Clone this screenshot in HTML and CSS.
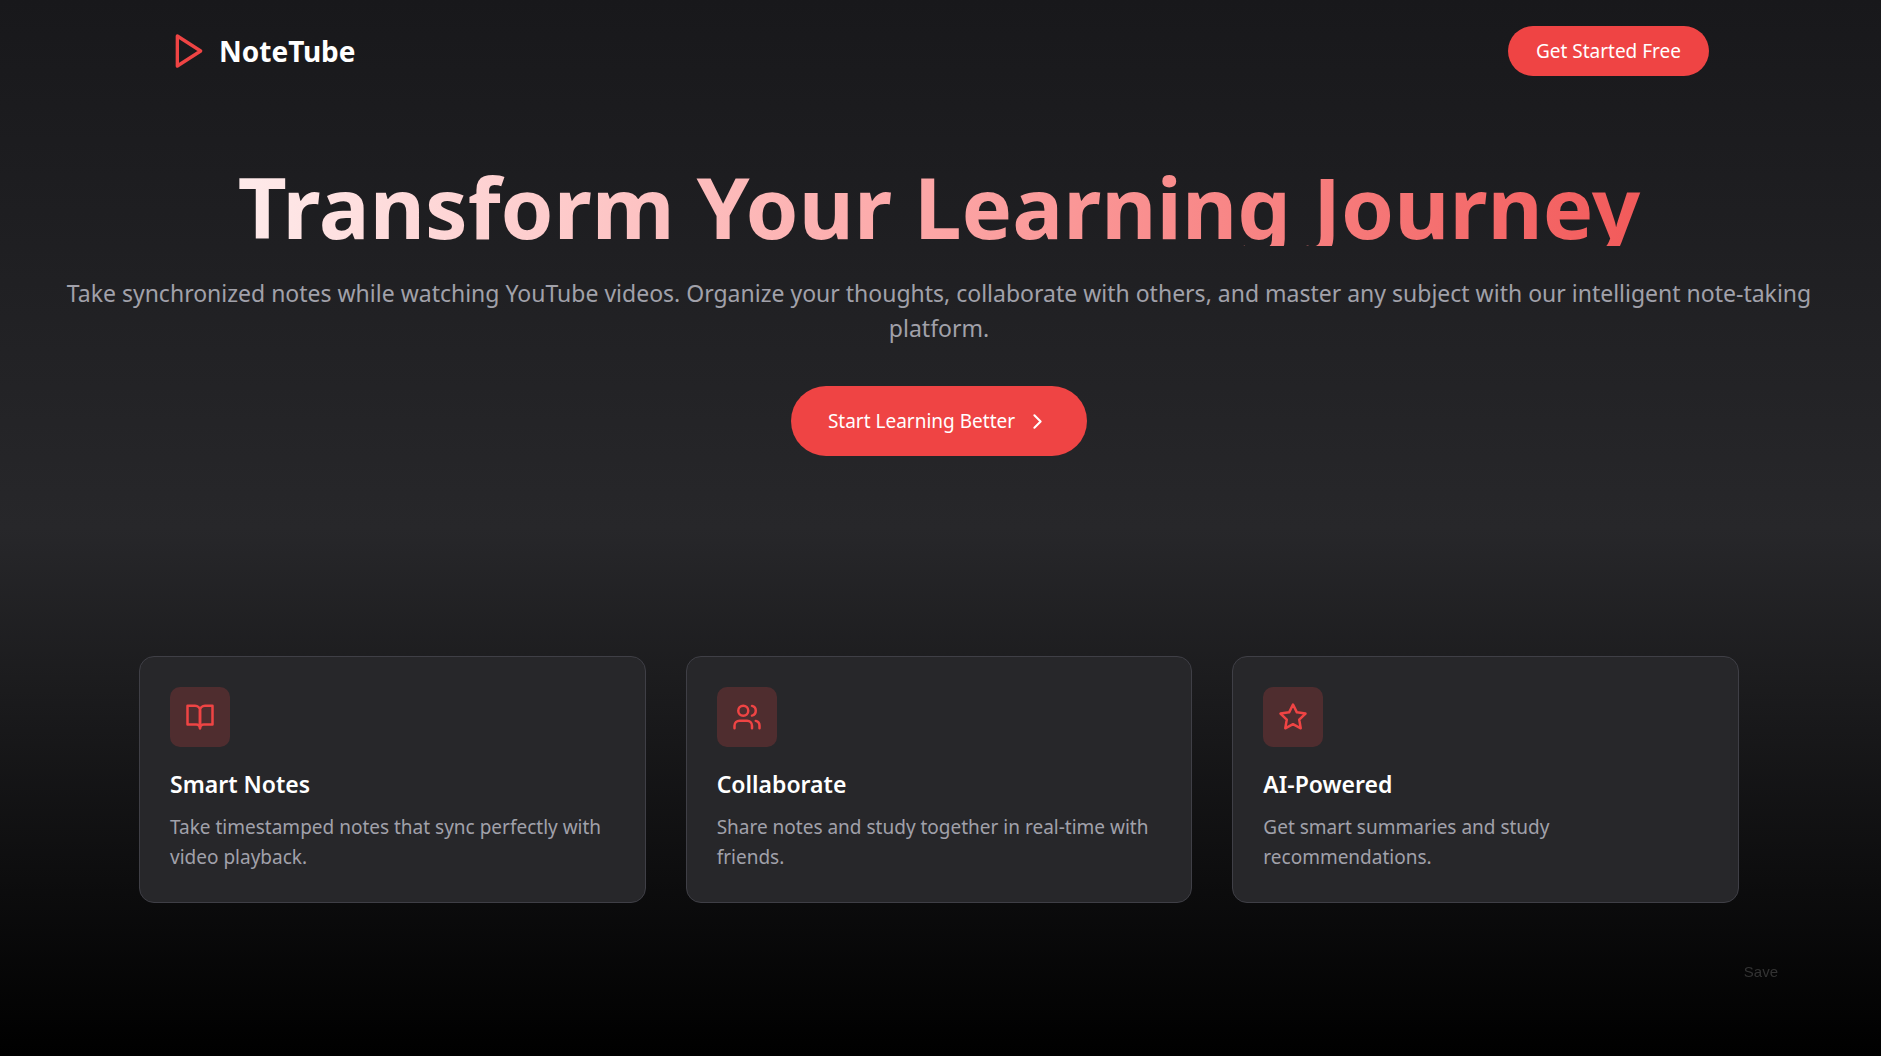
FILE: index.html
```
<!DOCTYPE html>
<html lang="en">
<head>
  <meta charset="utf-8">
  <meta name="viewport" content="width=device-width, initial-scale=1">
  <title>NoteTube</title>
  <link rel="stylesheet" href="styles.css">
</head>
<body>
  <div class="page">
    <header class="header">
      <div class="brand">
        <svg class="icon brand-icon" viewBox="0 0 24 24" aria-hidden="true"><polygon points="5 3 19 12 5 21 5 3"/></svg>
        <span class="brand-name">NoteTube</span>
      </div>
      <button type="button" class="button">Get Started Free</button>
    </header>

    <main>
      <section class="hero">
        <h1 class="hero-title">Transform Your Learning Journey</h1>
        <p class="hero-text">Take synchronized notes while watching YouTube videos. Organize your thoughts, collaborate with others, and master any subject with our intelligent note-taking platform.</p>
        <button type="button" class="button button-large">
          Start Learning Better
          <svg class="icon chevron" viewBox="0 0 24 24" aria-hidden="true"><path d="m9 18 6-6-6-6"/></svg>
        </button>
      </section>

      <section class="features">
        <article class="card">
          <div class="card-icon">
            <svg class="icon" viewBox="0 0 24 24" aria-hidden="true"><path d="M2 3h6a4 4 0 0 1 4 4v14a3 3 0 0 0-3-3H2z"/><path d="M22 3h-6a4 4 0 0 0-4 4v14a3 3 0 0 1 3-3h7z"/></svg>
          </div>
          <h2 class="card-title">Smart Notes</h2>
          <p class="card-text">Take timestamped notes that sync perfectly with video playback.</p>
        </article>
        <article class="card">
          <div class="card-icon">
            <svg class="icon" viewBox="0 0 24 24" aria-hidden="true"><path d="M16 21v-2a4 4 0 0 0-4-4H6a4 4 0 0 0-4 4v2"/><circle cx="9" cy="7" r="4"/><path d="M22 21v-2a4 4 0 0 0-3-3.87"/><path d="M16 3.13a4 4 0 0 1 0 7.75"/></svg>
          </div>
          <h2 class="card-title">Collaborate</h2>
          <p class="card-text">Share notes and study together in real-time with friends.</p>
        </article>
        <article class="card">
          <div class="card-icon">
            <svg class="icon" viewBox="0 0 24 24" aria-hidden="true"><polygon points="12 2 15.09 8.26 22 9.27 17 14.14 18.18 21.02 12 17.77 5.82 21.02 7 14.14 2 9.27 8.91 8.26 12 2"/></svg>
          </div>
          <h2 class="card-title">AI-Powered</h2>
          <p class="card-text">Get smart summaries and study recommendations.</p>
        </article>
      </section>
    </main>
    <button type="button" class="save">Save</button>
  </div>
</body>
</html>
```
FILE: styles.css
```
* {
  box-sizing: border-box;
  margin: 0;
}

body {
  font-family: "Segoe UI", "Noto Sans", "Open Sans", sans-serif;
  font-size: 19px;
  line-height: 30px;
  color: #fff;
  background: #000;
}

.page {
  min-height: 100vh;
  padding-right: 3px;
  background: linear-gradient(to bottom, #18181b, #27272a, #000);
}

.icon {
  width: 30px;
  height: 30px;
  flex: none;
  fill: none;
  stroke: currentColor;
  stroke-width: 2;
  stroke-linecap: round;
  stroke-linejoin: round;
}

.header {
  display: flex;
  align-items: center;
  justify-content: space-between;
  max-width: 1600px;
  margin: 0 auto;
  padding: 26px 30px 30px;
}

.brand {
  display: flex;
  align-items: center;
  gap: 10px;
}

.brand-icon {
  width: 40px;
  height: 40px;
  color: #ef4444;
}

.brand-name {
  font-size: 28px;
  line-height: 40px;
  font-weight: 700;
}

.button {
  display: inline-flex;
  align-items: center;
  gap: 10px;
  padding: 10px 28px;
  border: 0;
  border-radius: 35px;
  background: #ef4444;
  color: #fff;
  font: inherit;
  cursor: pointer;
}

.button:hover {
  background: #dc2626;
}

.button-large {
  padding: 20px 37px;
}

.chevron {
  width: 25px;
  height: 25px;
}

.hero {
  display: flex;
  flex-direction: column;
  align-items: center;
  padding: 50px 30px 100px;
  text-align: center;
}

/* The gradient is clipped to the glyphs inside a box shorter than the descenders. */
.hero-title {
  width: 100%;
  padding-top: 10px;
  margin-bottom: 30px;
  font-size: 85px;
  line-height: 80px;
  font-weight: 700;
  color: transparent;
  background: linear-gradient(to right, #fff, #fca5a5, #ef4444);
  background-clip: text;
  -webkit-background-clip: text;
}

.hero-text {
  margin-bottom: 40px;
  font-size: 23px;
  line-height: 35px;
  color: #a1a1aa;
}

.features {
  display: grid;
  grid-template-columns: repeat(3, 1fr);
  gap: 40px;
  max-width: 1600px;
  margin: 0 auto;
  padding: 100px 0;
}

.card {
  padding: 30px;
  border: 1px solid #3f3f46;
  border-radius: 15px;
  background: #27272a;
}

.card-icon {
  display: flex;
  align-items: center;
  justify-content: center;
  width: 60px;
  height: 60px;
  margin-bottom: 20px;
  border-radius: 10px;
  background: rgba(239, 68, 68, 0.2);
  color: #ef4444;
}

.card-title {
  margin-bottom: 10px;
  font-size: 23px;
  line-height: 35px;
  font-weight: 600;
}

.card-text {
  color: #a1a1aa;
}

.save {
  position: fixed;
  right: 95px;
  bottom: 68px;
  padding: 4px 8px;
  border: 0;
  background: transparent;
  font: 15px/24px "Liberation Sans", Arial, sans-serif;
  color: #333;
}

@media (max-width: 900px) {
  .features {
    grid-template-columns: 1fr;
    padding: 50px 30px;
  }

  .hero-title {
    font-size: 48px;
    line-height: 56px;
  }
}
```
